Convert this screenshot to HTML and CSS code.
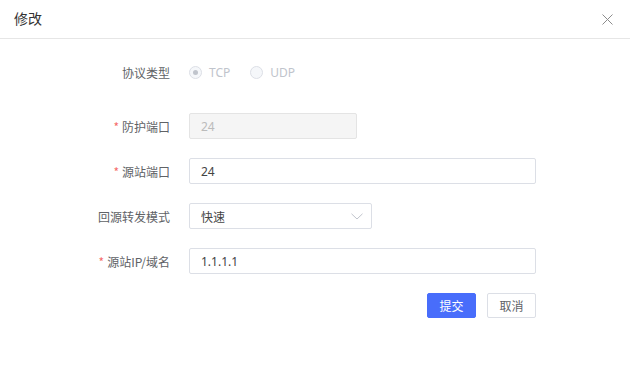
FILE: index.html
```html
<!DOCTYPE html>
<html lang="zh">
<head>
<meta charset="utf-8">
<link rel="stylesheet" href="styles.css">
</head>
<body>
<div class="dialog">
  <div class="header">
    <span class="title">修改</span>
    <span class="close">
      <svg width="11" height="11" viewBox="0 0 11 11"><path d="M0.5 0.5 L10.5 10.5 M10.5 0.5 L0.5 10.5" stroke="#8c8c8c" stroke-width="1" fill="none"/></svg>
    </span>
  </div>
  <div class="form">
    <div class="row row-radio">
      <label class="label">协议类型</label>
      <div class="control radios">
        <span class="radio"><span class="dot checked"></span>TCP</span>
        <span class="radio"><span class="dot"></span>UDP</span>
      </div>
    </div>
    <div class="row">
      <label class="label"><span class="req">*</span>防护端口</label>
      <div class="control"><div class="input disabled short">24</div></div>
    </div>
    <div class="row">
      <label class="label"><span class="req">*</span>源站端口</label>
      <div class="control"><div class="input wide">24</div></div>
    </div>
    <div class="row">
      <label class="label">回源转发模式</label>
      <div class="control"><div class="input select">快速
        <svg class="arrow" width="12" height="7" viewBox="0 0 12 7"><path d="M0.5 0.8 L6 6 L11.5 0.8" stroke="#c0c4cc" stroke-width="1" fill="none"/></svg>
      </div></div>
    </div>
    <div class="row">
      <label class="label"><span class="req">*</span>源站IP/域名</label>
      <div class="control"><div class="input wide">1.1.1.1</div></div>
    </div>
    <div class="actions">
      <button class="btn primary">提交</button>
      <button class="btn">取消</button>
    </div>
  </div>
</div>
</body>
</html>
```
FILE: styles.css
```css
* { box-sizing: border-box; }
html, body { margin: 0; padding: 0; background: #fff; }
body {
  font-family: "Noto Sans", "Noto Sans CJK SC", sans-serif;
  font-size: 12px;
  color: #606266;
  width: 630px;
  height: 367px;
  overflow: hidden;
}
.dialog { width: 630px; height: 367px; }
.header {
  height: 39px;
  border-bottom: 1px solid #e6e6e6;
  display: flex;
  align-items: center;
  justify-content: space-between;
  padding: 0 17px 2px 14px;
}
.title { font-size: 14px; color: #333; font-family: "Noto Sans CJK SC", sans-serif; }
.close { display: flex; width: 11px; height: 11px; margin-top: 3px; }
.form { padding-top: 20px; }
.row {
  display: grid;
  grid-template-columns: 170px 346px;
  column-gap: 19px;
  align-items: center;
  height: 26px;
  margin-bottom: 19px;
}
.row-radio { margin-bottom: 28px; }
.label {
  text-align: right;
  font-family: "Noto Sans CJK SC", sans-serif;
  font-size: 12px;
  color: #606266;
  white-space: nowrap;
}
.req { color: #f56c6c; margin-right: 3px; }
.radios { display: flex; gap: 20px; color: #c0c4cc; }
.radio { display: flex; align-items: center; gap: 7px; font-size: 12px; }
.dot {
  width: 13px; height: 13px; border-radius: 50%;
  border: 1px solid #dcdfe6; background: #f5f7fa;
  display: inline-flex; align-items: center; justify-content: center;
}
.dot.checked::after {
  content: ""; width: 5px; height: 5px; border-radius: 50%; background: #c0c4cc;
}
.input {
  height: 26px;
  border: 1px solid #dcdfe6;
  border-radius: 2px;
  padding: 0 11px;
  display: flex;
  align-items: center;
  font-size: 12px;
  color: #444;
  font-family: "Noto Sans", "Noto Sans CJK SC", sans-serif;
}
.input.disabled { background: #f5f5f5; color: #bbb; border-color: #e4e4e4; width: 168px; }
.input.wide { width: 347px; }
.input.select { width: 183px; justify-content: space-between; padding-right: 8px; font-family: "Noto Sans CJK SC", sans-serif; }
.arrow { display: block; }
.actions {
  display: flex;
  justify-content: flex-end;
  gap: 11px;
  width: 536px;
  margin-top: 5px;
}
.btn {
  width: 49px;
  height: 25px;
  border: 1px solid #dcdfe6;
  background: #fff;
  border-radius: 2px;
  font-family: "Noto Sans CJK SC", sans-serif;
  font-size: 12px;
  color: #606266;
  padding: 0;
}
.btn.primary { background: #486dfb; border-color: #486dfb; color: #fff; }
```
